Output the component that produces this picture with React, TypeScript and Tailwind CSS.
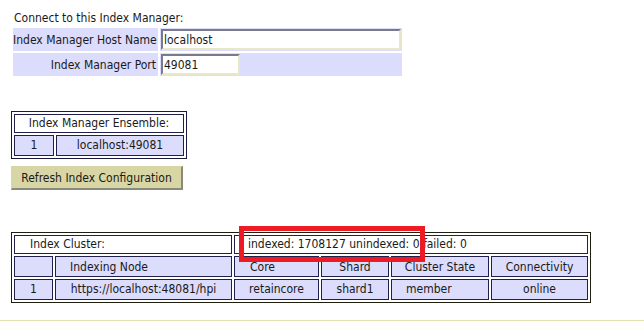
export default function App() {
  const cell = "border border-[#20204a] bg-[#dcdcfc] px-1 h-[21px] leading-[15px]";
  const input =
    "h-[21px] bg-white px-[1px] border-2 border-t-[#7a7a8a] border-l-[#7a7a8a] border-b-[#e8e8c8] border-r-[#e8e8c8] outline-none";
  return (
    <div className="relative w-[644px] h-[334px] bg-white text-[12px] text-[#1a1a1a] font-['DejaVu_Sans_Condensed','DejaVu_Sans',sans-serif]">
      <div className="pl-[11px] pt-[10px]">
        <div className="pl-[3px] leading-[16px]">Connect to this Index Manager:</div>
        <table className="table-fixed border-separate border-spacing-[2px] w-[391px]">
          <colgroup>
            <col className="w-[145px]" />
            <col className="w-[242px]" />
          </colgroup>
          <tbody>
            <tr>
              <td className="bg-[#dcdcfc] text-right pr-[2px] h-[23px] whitespace-nowrap">Index Manager Host Name</td>
              <td className="bg-[#dcdcfc] p-[1px]">
                <input defaultValue="localhost" className={input + " w-[240px]"} />
              </td>
            </tr>
            <tr>
              <td className="bg-[#dcdcfc] text-right pr-[2px] h-[23px] whitespace-nowrap">Index Manager Port</td>
              <td className="bg-[#dcdcfc] p-[1px]">
                <input defaultValue="49081" className={input + " w-[79px]"} />
              </td>
            </tr>
          </tbody>
        </table>

        <table className="border-separate border-spacing-[2px] border border-[#1a1a40] mt-[33px] w-[176px] text-center">
          <tbody>
            <tr>
              <td colSpan={2} className="border border-[#20204a] bg-white h-[19px] leading-[15px]">Index Manager Ensemble:</td>
            </tr>
            <tr>
              <td className={cell + " w-[40px]"}>1</td>
              <td className={cell}>localhost:49081</td>
            </tr>
          </tbody>
        </table>

        <button className="mt-[7px] w-[172px] h-[24px] bg-[#d9d6a6] border border-[#d9d6a6] border-r-[#8a8a7a] border-b-[#8a8a7a] border-r-2 border-b-2 text-[12px]">
          Refresh Index Configuration
        </button>

        <table className="table-fixed border-separate border-spacing-[2px] border border-[#1f1f10] mt-[42px] w-[580px] text-center">
          <colgroup>
            <col className="w-[39px]" />
            <col className="w-[177px]" />
            <col className="w-[85px]" />
            <col className="w-[68px]" />
            <col className="w-[98px]" />
            <col className="w-[97px]" />
          </colgroup>
          <tbody>
            <tr>
              <td colSpan={2} className="border border-[#20204a] bg-white h-[19px] leading-[15px] text-left pl-[15px]">Index Cluster:</td>
              <td colSpan={4} className="border border-[#20204a] bg-white leading-[15px] text-left pl-[13px] whitespace-nowrap">
                indexed: 1708127 unindexed: 0 failed: 0
              </td>
            </tr>
            <tr>
              <td className={cell + " pt-[2px]"}></td>
              <td className={cell + " pt-[2px] text-left pl-[14px]"}>Indexing Node</td>
              <td className={cell + " pt-[2px] text-left pl-[15px]"}>Core</td>
              <td className={cell + " pt-[2px]"}>Shard</td>
              <td className={cell + " pt-[2px]"}>Cluster State</td>
              <td className={cell + " pt-[2px]"}>Connectivity</td>
            </tr>
            <tr>
              <td className={cell + " h-[20px]"}>1</td>
              <td className={cell + " h-[20px] whitespace-nowrap"}>https://localhost:48081/hpi</td>
              <td className={cell + " h-[20px]"}>retaincore</td>
              <td className={cell + " h-[20px]"}>shard1</td>
              <td className={cell + " h-[20px] text-left pl-[14px]"}>member</td>
              <td className={cell + " h-[20px]"}>online</td>
            </tr>
          </tbody>
        </table>
      </div>

      <div className="absolute left-[239px] top-[226px] w-[186px] h-[36px] border-[5px] border-[#ed1c24]" />

      <div className="absolute left-0 right-0 top-[320px] h-[1px] bg-[#e2e0b0]" />
    </div>
  );
}
